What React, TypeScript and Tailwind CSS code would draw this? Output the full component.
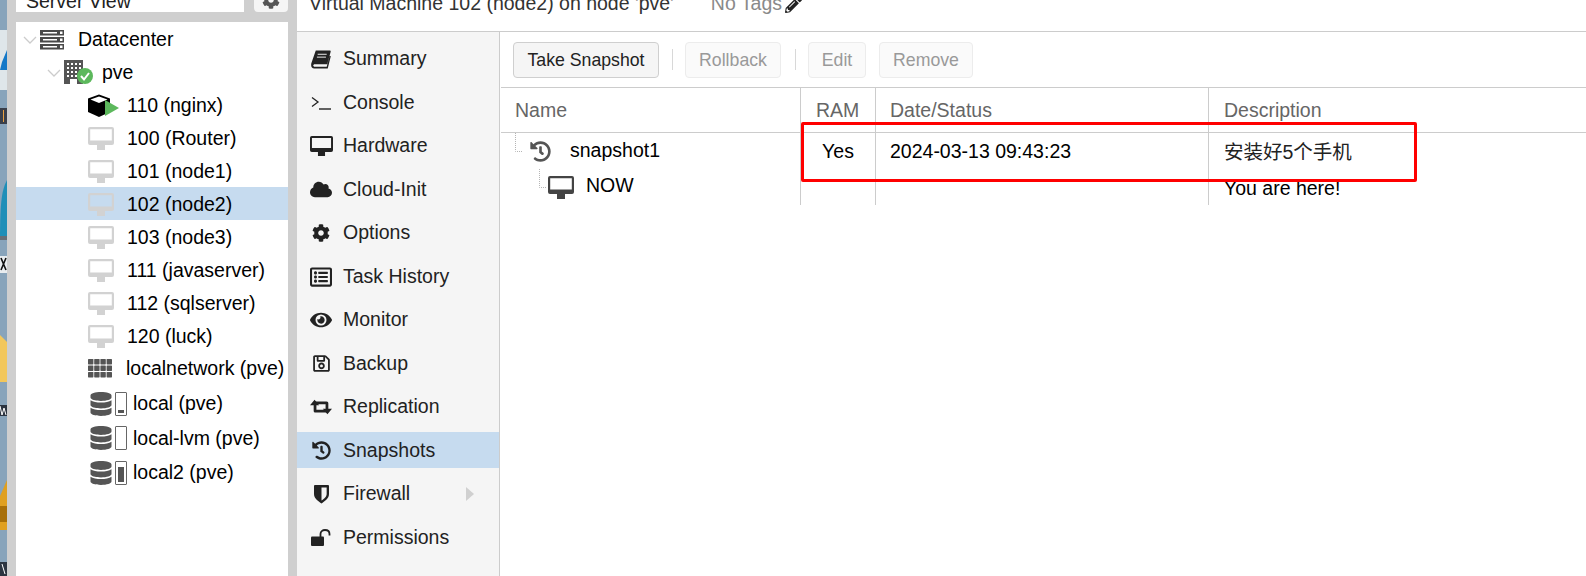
import type { ReactNode } from "react";
import {
  FaCloud,
  FaCog,
  FaDatabase,
  FaEye,
  FaHistory,
  FaPencilAlt,
  FaRegListAlt,
  FaRegSave,
} from "react-icons/fa";

// bit of the desktop wallpaper peeking out on the far left
const DesktopStrip = () => (
  <svg width="7" height="576" viewBox="0 0 7 576" className="shrink-0 block">
    <rect width="7" height="576" fill="#88a4bb" />
    <rect x="0" y="30" width="7" height="60" fill="#dfe6ea" />
    <path d="M7 50 L2 62 L0 70 L7 70Z" fill="#1478c8" />
    <rect x="0" y="108" width="7" height="16" fill="#3a3f4a" />
    <rect x="3" y="110" width="1" height="12" fill="#e8a040" />
    <path d="M7 180 C2 190 0 200 0 240 L7 240Z" fill="#1f8fb8" />
    <rect x="0" y="236" width="7" height="4" fill="#666f78" />
    <rect x="0" y="256" width="7" height="17" fill="#e8ecef" />
    <path d="M1 258 L6 270 M6 258 L1 270" stroke="#111" strokeWidth="1.6" />
    <path d="M0 335 L7 342 L7 382 L0 382Z" fill="#f2c75c" />
    <rect x="0" y="405" width="7" height="11" fill="#2c3440" />
    <path d="M0 406 L2 415 L4 408 L6 415" stroke="#fff" fill="none" />
    <path d="M7 480 L0 496 L0 530 L7 530Z" fill="#e0a020" />
    <rect x="0" y="506" width="7" height="16" fill="#a86f08" />
    <rect x="0" y="562" width="7" height="14" fill="#2c3440" />
    <path d="M2 564 L5 574" stroke="#fff" />
  </svg>
);

const Chevron = () => (
  <svg width="14" height="8" viewBox="0 0 14 8" className="shrink-0">
    <path d="M1 1 L7 7 L13 1" fill="none" stroke="#cccccc" strokeWidth="1.3" />
  </svg>
);

const ServerIcon = () => (
  <svg width="24" height="20" viewBox="0 0 24 20" className="shrink-0">
    {[0, 7, 14].map((y) => (
      <g key={y}>
        <rect x="0" y={y} width="24" height="5.5" fill="#4a4a4a" />
        <rect x="3" y={y + 2} width="14" height="1.5" fill="#ffffff" />
        <rect x="20" y={y + 1.5} width="2.5" height="2.5" fill="#ffffff" />
      </g>
    ))}
  </svg>
);

const NodeIcon = () => (
  <svg width="29" height="26" viewBox="0 0 29 26" className="shrink-0">
    <rect x="0" y="0" width="19" height="24" fill="#555555" />
    {[3, 7, 11, 15].map((y) =>
      [3, 7, 11, 15].map((x) => <rect key={`${x}-${y}`} x={x} y={y} width="2" height="2" fill="#ffffff" />),
    )}
    <rect x="6" y="19" width="7" height="5" fill="#ffffff" />
    <circle cx="21" cy="16" r="8" fill="#5cb85c" />
    <path d="M17 16 L20 19.5 L25 13" fill="none" stroke="#ffffff" strokeWidth="2" />
  </svg>
);

const RunningVm = () => (
  <svg width="31" height="24" viewBox="0 0 31 24" className="shrink-0">
    <path d="M11 0.5 L22 4.5 L22 18 L11 23 L0 18 L0 4.5Z" fill="#000000" />
    <path d="M11 2.5 L19.5 5.5 L11 9 L2.5 5.5Z" fill="#ffffff" />
    <path d="M17 6 L31 14 L17 22Z" fill="#5cb85c" />
  </svg>
);

const DesktopIcon = ({ color, width = 26 }: { color: string; width?: number }) => (
  <svg width={width} height={(width * 23) / 26} viewBox="0 0 26 23" className="shrink-0">
    <path
      fillRule="evenodd"
      fill={color}
      d="M2 0 H24 Q26 0 26 2 V16 Q26 18 24 18 H2 Q0 18 0 16 V2 Q0 0 2 0Z M2.2 2.2 V13.5 H23.8 V2.2Z"
    />
    <rect x="9" y="18" width="8" height="5" fill={color} />
  </svg>
);

const GridIcon = () => (
  <svg width="24" height="19" viewBox="0 0 24 19" className="shrink-0">
    {[0, 6.5, 13].map((y) =>
      [0, 6.2, 12.4, 18.6].map((x) => <rect key={`${x}-${y}`} x={x} y={y} width="5.4" height="5.4" rx="0.6" fill="#555555" />),
    )}
  </svg>
);

const BookIcon = () => (
  <svg width="20" height="19" viewBox="0 0 21 20">
    <path d="M5 0.5 H20 Q21 0.5 20.6 2 L17 15 H4 C1.8 15 1.8 17.6 4 17.6 H16.5 L19.6 6 L20.8 6.6 L17.6 19.5 H3.5 C0.5 19.5 -0.5 16.5 0.5 13.5Z" fill="#222222" />
    <path d="M7 4.5 H16.5 M6.2 7.5 H15.7" stroke="#f5f5f5" strokeWidth="1" />
  </svg>
);

const ConsoleIcon = () => (
  <svg width="20" height="14" viewBox="0 0 20 14">
    <path d="M1 1.5 L7 6 L1 10.5" fill="none" stroke="#222222" strokeWidth="1.3" />
    <path d="M8 13 H20" fill="none" stroke="#222222" strokeWidth="1.4" />
  </svg>
);

const RetweetIcon = () => (
  <svg width="23" height="16" viewBox="0 0 24 16">
    <path d="M0 6 L5 0 L10 6 H7 V11 H17 L20 14 H6 C4.5 14 4 13 4 12 V6Z" fill="#222222" />
    <path d="M24 10 L19 16 L14 10 H17 V5 H7 L4 2 H18 C19.5 2 20 3 20 4 V10Z" fill="#222222" />
  </svg>
);

const ShieldIcon = () => (
  <svg width="15" height="20" viewBox="0 0 16 20">
    <path d="M1 0.5 H15 Q16 0.5 16 1.5 V10 C16 15 11 18 8 20 C5 18 0 15 0 10 V1.5 Q0 0.5 1 0.5Z" fill="#222222" />
    <path d="M8 3 H13.5 V10 C13.5 13 10.5 15.5 8 17Z" fill="#f5f5f5" />
  </svg>
);

const UnlockIcon = () => (
  <svg width="20" height="17" viewBox="0 0 20 17">
    <rect x="0" y="7.5" width="13" height="9.5" rx="1" fill="#222222" />
    <path d="M9.5 8 V5 C9.5 2.5 11.5 1 14 1 C16.5 1 18.5 2.5 18.5 5 V6.5" fill="none" stroke="#222222" strokeWidth="1.8" />
  </svg>
);

const StorageBar = ({ fill }: { fill: number }) => (
  <div className="w-[12px] h-[24px] border border-[#666666] rounded-[1px] p-[2px] flex flex-col justify-end shrink-0">
    {fill > 0 && <div className="bg-[#555555]" style={{ height: fill }} />}
  </div>
);

const TreeText = ({ children, className }: { children: ReactNode; className: string }) => (
  <span className={`whitespace-nowrap text-[#000000] ${className}`}>{children}</span>
);

const VmRow = ({ label, selected }: { label: string; selected?: boolean }) => (
  <div className={`flex items-center h-[33px] pt-[2px] pl-[72px] ${selected ? "bg-[#c6dbef]" : ""}`}>
    <DesktopIcon color="#d2d2d2" />
    <TreeText className="ml-[13px]">{label}</TreeText>
  </div>
);

const StorageRow = ({ label, fill }: { label: string; fill: number }) => (
  <div className="flex items-center h-[34.5px] pt-[3px] pl-[73px]">
    <FaDatabase size={24} color="#555555" className="shrink-0" />
    <div className="ml-[2px]">
      <StorageBar fill={fill} />
    </div>
    <TreeText className="ml-[6px]">{label}</TreeText>
  </div>
);

const ResourceTree = () => (
  <div className="flex-1 bg-white mt-[10px]">
    <div className="flex items-center h-[33px] pt-[2px] pl-[7px]">
      <Chevron />
      <div className="ml-[3px]">
        <ServerIcon />
      </div>
      <TreeText className="ml-[14px]">Datacenter</TreeText>
    </div>
    <div className="flex items-center h-[33px] pt-[2px] pl-[31px]">
      <Chevron />
      <div className="ml-[3px]">
        <NodeIcon />
      </div>
      <TreeText className="ml-[9px]">pve</TreeText>
    </div>
    <div className="flex items-center h-[33px] pt-[2px] pl-[72px]">
      <RunningVm />
      <TreeText className="ml-[8px]">110 (nginx)</TreeText>
    </div>
    <VmRow label="100 (Router)" />
    <VmRow label="101 (node1)" />
    <VmRow label="102 (node2)" selected />
    <VmRow label="103 (node3)" />
    <VmRow label="111 (javaserver)" />
    <VmRow label="112 (sqlserver)" />
    <VmRow label="120 (luck)" />
    <div className="flex items-center h-[33px] pl-[72px]">
      <GridIcon />
      <TreeText className="ml-[14px]">localnetwork (pve)</TreeText>
    </div>
    <StorageRow label="local (pve)" fill={3} />
    <StorageRow label="local-lvm (pve)" fill={0} />
    <StorageRow label="local2 (pve)" fill={15} />
  </div>
);

const navItems = [
  { label: "Summary", icon: <BookIcon /> },
  { label: "Console", icon: <ConsoleIcon /> },
  { label: "Hardware", icon: <DesktopIcon color="#222222" width={23} /> },
  { label: "Cloud-Init", icon: <FaCloud size={23} /> },
  { label: "Options", icon: <FaCog size={18} /> },
  { label: "Task History", icon: <FaRegListAlt size={22} /> },
  { label: "Monitor", icon: <FaEye size={22} /> },
  { label: "Backup", icon: <FaRegSave size={19} /> },
  { label: "Replication", icon: <RetweetIcon /> },
  { label: "Snapshots", icon: <FaHistory size={19} />, active: true },
  { label: "Firewall", icon: <ShieldIcon />, arrow: true },
  { label: "Permissions", icon: <UnlockIcon /> },
];

const SideNav = () => (
  <div className="w-[203px] shrink-0 bg-[#f5f5f5] border-r border-[#cccccc] pt-[8px] flex flex-col gap-[7.5px]">
    {navItems.map((item) => (
      <div
        key={item.label}
        className={`flex items-center h-[36px] pt-[2px] pl-[13px] text-[#222222] ${item.active ? "bg-[#c6dbef]" : ""}`}
      >
        <span className="w-[22px] flex justify-center text-[#222222] shrink-0">{item.icon}</span>
        <span className="ml-[11px] whitespace-nowrap">{item.label}</span>
        {item.arrow && (
          <svg width="8" height="14" viewBox="0 0 8 14" className="ml-auto mr-[25px]">
            <path d="M0 0 L8 7 L0 14Z" fill="#d0d0d0" />
          </svg>
        )}
      </div>
    ))}
  </div>
);

const ToolButton = ({ label, width, disabled }: { label: string; width: string; disabled?: boolean }) => (
  <button
    className={`h-[36px] rounded-[4px] border pt-[2px] flex items-center justify-center shrink-0 text-[17.7px] ${width} ${
      disabled ? "bg-[#fafafa] border-[#ececec] text-[#999999]" : "bg-[#f5f5f5] border-[#cfcfcf] text-[#222222]"
    }`}
  >
    {label}
  </button>
);

const Toolbar = () => (
  <div className="h-[56px] shrink-0 ml-[1px] border-b border-[#cccccc] pl-[12px] flex items-center">
    <ToolButton label="Take Snapshot" width="w-[146px]" />
    <div className="w-px h-[21px] bg-[#d8d8d8] ml-[13px] mr-[12px]" />
    <ToolButton label="Rollback" width="w-[96px]" disabled />
    <div className="w-px h-[21px] bg-[#d8d8d8] ml-[14px] mr-[12px]" />
    <ToolButton label="Edit" width="w-[58px]" disabled />
    <div className="ml-[13px]">
      <ToolButton label="Remove" width="w-[94px]" disabled />
    </div>
  </div>
);

const cellLine = "border-r border-[#cccccc]";
const headCell = "flex items-center pt-[2px] text-[#666666] border-b border-[#cccccc]";

const SnapshotTable = () => (
  <div className="relative grid grid-cols-[301px_75px_333px_1fr] grid-rows-[45px_36px_36px] text-[#000000]">
    <div className={`${headCell} ${cellLine} ml-[1px] pl-[14px]`}>Name</div>
    <div className={`${headCell} ${cellLine} pl-[15px]`}>RAM</div>
    <div className={`${headCell} ${cellLine} pl-[14px]`}>Date/Status</div>
    <div className={`${headCell} pl-[15px]`}>Description</div>

    <div className={`flex items-center ${cellLine}`}>
      <svg width="7" height="36" viewBox="0 0 7 36" className="ml-[15px] shrink-0">
        <path d="M0.5 0 V18.5 H7" fill="none" stroke="#b5b5b5" strokeDasharray="1 1" />
      </svg>
      <FaHistory size={21} color="#555555" className="ml-[8px] shrink-0" />
      <span className="ml-[19px] whitespace-nowrap">snapshot1</span>
    </div>
    <div className={`flex items-center justify-center pt-[2px] ${cellLine}`}>Yes</div>
    <div className={`flex items-center pl-[14px] pt-[2px] ${cellLine}`}>2024-03-13 09:43:23</div>
    <div className="flex items-center pl-[15px] pt-[4px] text-[#222222]">安装好5个手机</div>

    <div className={`flex items-center ${cellLine}`}>
      <svg width="8" height="36" viewBox="0 0 8 36" className="ml-[39px] shrink-0">
        <path d="M0.5 0 V18.5 H8" fill="none" stroke="#b5b5b5" strokeDasharray="1 1" />
      </svg>
      <div className="ml-[1px]">
        <DesktopIcon color="#444444" />
      </div>
      <span className="ml-[12px] whitespace-nowrap -translate-y-[1px]">NOW</span>
    </div>
    <div className={cellLine} />
    <div className={cellLine} />
    <div className="flex items-center pl-[15px] translate-y-[2px]">You are here!</div>

    {/* red annotation drawn over the screenshot */}
    <div className="absolute left-[301px] top-[34px] w-[616px] h-[60px] border-[3px] border-[#ff0000] rounded-[2px]" />
  </div>
);

export default function App() {
  return (
    <div className="w-[1586px] h-[576px] flex overflow-hidden bg-white text-[19.5px] font-['Liberation_Sans','Noto_Sans_CJK_SC',sans-serif]">
      <DesktopStrip />
      <div className="w-[290px] shrink-0 bg-[#cfcfcf] px-[9px] flex flex-col">
        <div className="h-[12px] flex shrink-0">
          <div className="w-[228px] bg-white pl-[10px] flex items-center h-full">
            <span className="h-0 flex items-center text-[#222222] whitespace-nowrap -translate-y-[4px]">Server View</span>
          </div>
          <div className="ml-[10px] w-[34px] bg-[#f5f5f5] rounded-b-[4px] flex justify-center items-end overflow-hidden">
            <FaCog size={18} color="#555555" className="mb-[3px]" />
          </div>
        </div>
        <ResourceTree />
      </div>
      <div className="flex-1 flex flex-col min-w-0">
        <div className="h-[32px] shrink-0 border-b border-[#cccccc] flex items-start pl-[12px] text-[#333333]">
          <span className="h-[8px] flex items-center whitespace-nowrap">Virtual Machine 102 (node2) on node 'pve'</span>
          <span className="h-[8px] flex items-center whitespace-nowrap ml-[37px] text-[#8a8a8a]">No Tags</span>
          <span className="h-[8px] flex items-center ml-[3px] text-[#222222]">
            <FaPencilAlt size={17} />
          </span>
        </div>
        <div className="flex flex-1 min-h-0">
          <SideNav />
          <div className="flex-1 flex flex-col min-w-0">
            <Toolbar />
            <SnapshotTable />
          </div>
        </div>
      </div>
    </div>
  );
}
